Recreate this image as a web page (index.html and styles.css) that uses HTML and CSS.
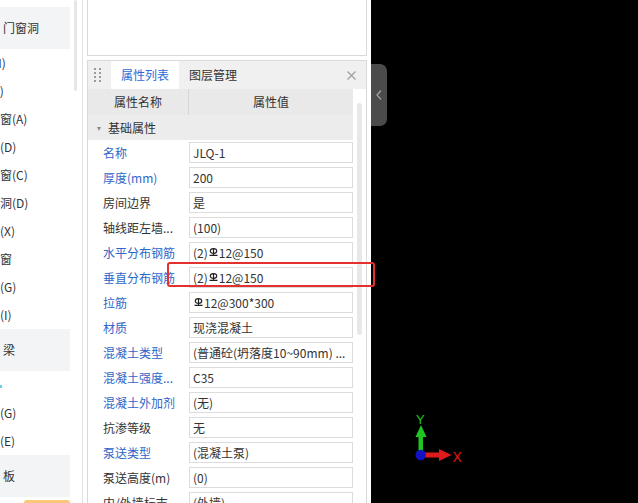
FILE: index.html
```html
<!DOCTYPE html>
<html lang="zh-CN">
<head>
    <meta charset="UTF-8">
    <meta name="viewport" content="width=device-width, initial-scale=1.0">
    <title>属性列表</title>
    <link rel="stylesheet" href="styles.css">
</head>
<body>
    <div class="app">
        <aside class="sidebar">
            <div class="tree">
                <div class="group">门窗洞</div>
                <div class="item">门(M)</div>
                <div class="item">窗(C)</div>
                <div class="item">门联窗(A)</div>
                <div class="item">墙洞(D)</div>
                <div class="item">带形窗(C)</div>
                <div class="item">带形洞(D)</div>
                <div class="item">飘窗(X)</div>
                <div class="item">老虎窗</div>
                <div class="item">过梁(G)</div>
                <div class="item">壁龛(I)</div>
                <div class="group">梁</div>
                <div class="item plain"><span class="mark"></span></div>
                <div class="item">连梁(G)</div>
                <div class="item">圈梁(E)</div>
                <div class="group">板</div>
                <div class="item current"></div>
            </div>
            <div class="side-thumb"></div>
        </aside>

        <main class="main">
            <div class="top-box"></div>
            <section class="panel">
                <div class="tabbar">
                    <div class="grip">
                        <svg width="7" height="14" viewBox="0 0 7 14">
                            <g fill="#9a9a9a">
                                <rect x="0" y="0" width="2" height="2"/><rect x="5" y="0" width="2" height="2"/>
                                <rect x="0" y="4" width="2" height="2"/><rect x="5" y="4" width="2" height="2"/>
                                <rect x="0" y="8" width="2" height="2"/><rect x="5" y="8" width="2" height="2"/>
                                <rect x="0" y="12" width="2" height="2"/><rect x="5" y="12" width="2" height="2"/>
                            </g>
                        </svg>
                    </div>
                    <div class="tab active">属性列表</div>
                    <div class="tab">图层管理</div>
                    <div class="close">
                        <svg width="9" height="9" viewBox="0 0 9 9">
                            <path d="M0.5 0.5 L8.5 8.5 M8.5 0.5 L0.5 8.5" stroke="#9c9c9c" stroke-width="1.1" fill="none"/>
                        </svg>
                    </div>
                </div>
                <div class="prop-body">
                    <div class="prop-table">
                        <div class="prop-head">
                            <div class="col-name">属性名称</div>
                            <div class="col-value">属性值</div>
                        </div>
                        <div class="prop-group"><span class="caret"></span>基础属性</div>
                        <div id="rows"></div>
                    </div>
                    <div class="prop-scroll"><div class="thumb"></div></div>
                </div>
            </section>
        </main>

        <div class="viewport">
            <div class="collapse">
                <svg width="6" height="10" viewBox="0 0 6 10">
                    <path d="M5 0.5 L1 5 L5 9.5" stroke="#a0a0a0" stroke-width="1.3" fill="none"/>
                </svg>
            </div>
            <svg class="axis" width="70" height="70" viewBox="0 0 70 70">
                <text x="11" y="18.5" font-size="13" fill="#22c422" font-family="Liberation Sans, sans-serif">Y</text>
                <rect x="13.5" y="30" width="4.5" height="18" fill="#22c422"/>
                <polygon points="10.5,32 21.5,32 16,20" fill="#22c422"/>
                <rect x="19" y="47.5" width="16" height="5" fill="#e01a1a"/>
                <polygon points="34,44 34,56 46.5,50" fill="#e01a1a"/>
                <text x="47.5" y="57" font-size="14" fill="#e01a1a" font-family="Liberation Sans, sans-serif">X</text>
                <circle cx="15.7" cy="50" r="5.2" fill="#1212c4"/>
            </svg>
        </div>

        <div class="highlight"></div>
    </div>

    <script>
        const steel = '<svg class="steel" width="9" height="8" viewBox="0 0 9 8"><ellipse cx="4.5" cy="3" rx="3.2" ry="2.4" fill="none" stroke="#222" stroke-width="1.2"/><path d="M4.5 0 V7.3 M0.5 7.3 H8.5" stroke="#222" stroke-width="1.2" fill="none"/></svg>';

        const props = [
            { name: '名称', value: 'JLQ-1', link: true },
            { name: '厚度(mm)', value: '200', link: true },
            { name: '房间边界', value: '是' },
            { name: '轴线距左墙...', value: '(100)' },
            { name: '水平分布钢筋', value: '(2)' + steel + '12@150', link: true },
            { name: '垂直分布钢筋', value: '(2)' + steel + '12@150', link: true },
            { name: '拉筋', value: steel + '12@300*300', link: true },
            { name: '材质', value: '现浇混凝土', link: true },
            { name: '混凝土类型', value: '(普通砼(坍落度10~90mm) ...', link: true },
            { name: '混凝土强度...', value: 'C35', link: true },
            { name: '混凝土外加剂', value: '(无)', link: true },
            { name: '抗渗等级', value: '无' },
            { name: '泵送类型', value: '(混凝土泵)', link: true },
            { name: '泵送高度(m)', value: '(0)' },
            { name: '内/外墙标志', value: '(外墙)' }
        ];

        document.getElementById('rows').innerHTML = props.map(p => `
            <div class="row">
                <div class="label${p.link ? ' link' : ''}">${p.name}</div>
                <div class="value"><div class="box">${p.value}</div></div>
            </div>
        `).join('');
    </script>
</body>
</html>
```

FILE: styles.css
```css
body {
    margin: 0;
    font-family: "Noto Sans CJK SC", "Noto Sans", sans-serif;
    font-size: 12px;
    color: #333;
    background: #fff;
}

.app {
    display: flex;
    height: 503px;
    overflow: hidden;
    position: relative;
}

/* left component tree, scrolled sideways */
.sidebar {
    width: 82px;
    flex-shrink: 0;
    border-right: 1px solid #e2e2e2;
    position: relative;
    overflow: hidden;
}

.tree {
    padding-top: 7px;
}

.group {
    width: 70px;
    height: 42px;
    line-height: 42px;
    padding-left: 3px;
    box-sizing: border-box;
    background: #f3f4f6;
}

.item {
    width: 72px;
    height: 28px;
    line-height: 28px;
    white-space: nowrap;
    overflow: hidden;
    text-indent: -24px;
}

.item.plain {
    text-indent: 0;
}

.mark {
    display: inline-block;
    width: 2px;
    height: 3px;
    background: #62d2ef;
    vertical-align: middle;
}

.item.current {
    width: 46px;
    margin: 3px 0 0 24px;
    background: #f8c878;
    border-radius: 3px 3px 0 0;
}

.side-thumb {
    position: absolute;
    left: 74px;
    top: 0;
    width: 3px;
    height: 91px;
    background: #e6e6e6;
    border-radius: 2px;
}

/* middle column */
.main {
    width: 288px;
    flex-shrink: 0;
    padding: 0 4px;
    box-sizing: border-box;
    display: flex;
    flex-direction: column;
}

.top-box {
    height: 56px;
    border: 1px solid #d9d9d9;
    border-top: none;
    box-sizing: border-box;
    margin-bottom: 4px;
}

.panel {
    flex: 1;
    min-height: 0;
    border: 1px solid #d9d9d9;
    border-bottom: none;
    display: flex;
    flex-direction: column;
}

.tabbar {
    height: 28px;
    flex-shrink: 0;
    background: #f0f0f0;
    display: flex;
}

.grip {
    width: 23px;
    padding-left: 6px;
    box-sizing: border-box;
    display: flex;
    align-items: center;
}

.tab {
    padding: 0 10px;
    line-height: 28px;
}

.tab.active {
    width: 68px;
    padding: 0;
    background: #fff;
    color: #2b6bd6;
    text-align: center;
}

.close {
    margin-left: auto;
    margin-right: 10px;
    display: flex;
    align-items: center;
}

.prop-body {
    flex: 1;
    min-height: 0;
    display: flex;
    overflow: hidden;
}

.prop-table {
    width: 265px;
}

.prop-head {
    display: flex;
    height: 26px;
    line-height: 26px;
    background: #e9e9e9;
}

.prop-head .col-name {
    width: 100px;
    border-right: 1px solid #d6d6d6;
    text-align: center;
}

.prop-head .col-value {
    flex: 1;
    text-align: center;
}

.prop-group {
    height: 25px;
    line-height: 25px;
    padding-left: 9px;
    background: #ececec;
}

.caret {
    display: inline-block;
    width: 0;
    height: 0;
    border-left: 2.5px solid transparent;
    border-right: 2.5px solid transparent;
    border-top: 4px solid #8a8a8a;
    margin-right: 7px;
    vertical-align: 2px;
}

.row {
    display: flex;
    height: 25px;
}

.label {
    width: 101px;
    padding-left: 15px;
    box-sizing: border-box;
    line-height: 25px;
    white-space: nowrap;
    overflow: hidden;
}

.label.link {
    color: #3066c8;
}

.value {
    flex: 1;
    padding-top: 2px;
}

.box {
    height: 21px;
    line-height: 19px;
    padding-left: 3px;
    border: 1px solid #dcdcdc;
    box-sizing: border-box;
    white-space: nowrap;
    overflow: hidden;
}

.steel {
    vertical-align: 2px;
    margin: 0 1px;
}

.prop-scroll {
    width: 13px;
}

.thumb {
    width: 5px;
    height: 232px;
    margin: 14px 0 0 4px;
    background: #e8e8e8;
    border-radius: 3px;
}

/* black drawing area */
.viewport {
    flex: 1;
    background: #000;
    position: relative;
}

.collapse {
    position: absolute;
    left: 0;
    top: 64px;
    width: 16px;
    height: 62px;
    background: #4b4b4b;
    border-radius: 0 7px 7px 0;
    display: flex;
    align-items: center;
    justify-content: center;
}

.axis {
    position: absolute;
    left: 34px;
    top: 405px;
}

.highlight {
    position: absolute;
    left: 167px;
    top: 262px;
    width: 208px;
    height: 25px;
    border: 2px solid #e53030;
    border-radius: 3px;
    box-sizing: border-box;
}
```
